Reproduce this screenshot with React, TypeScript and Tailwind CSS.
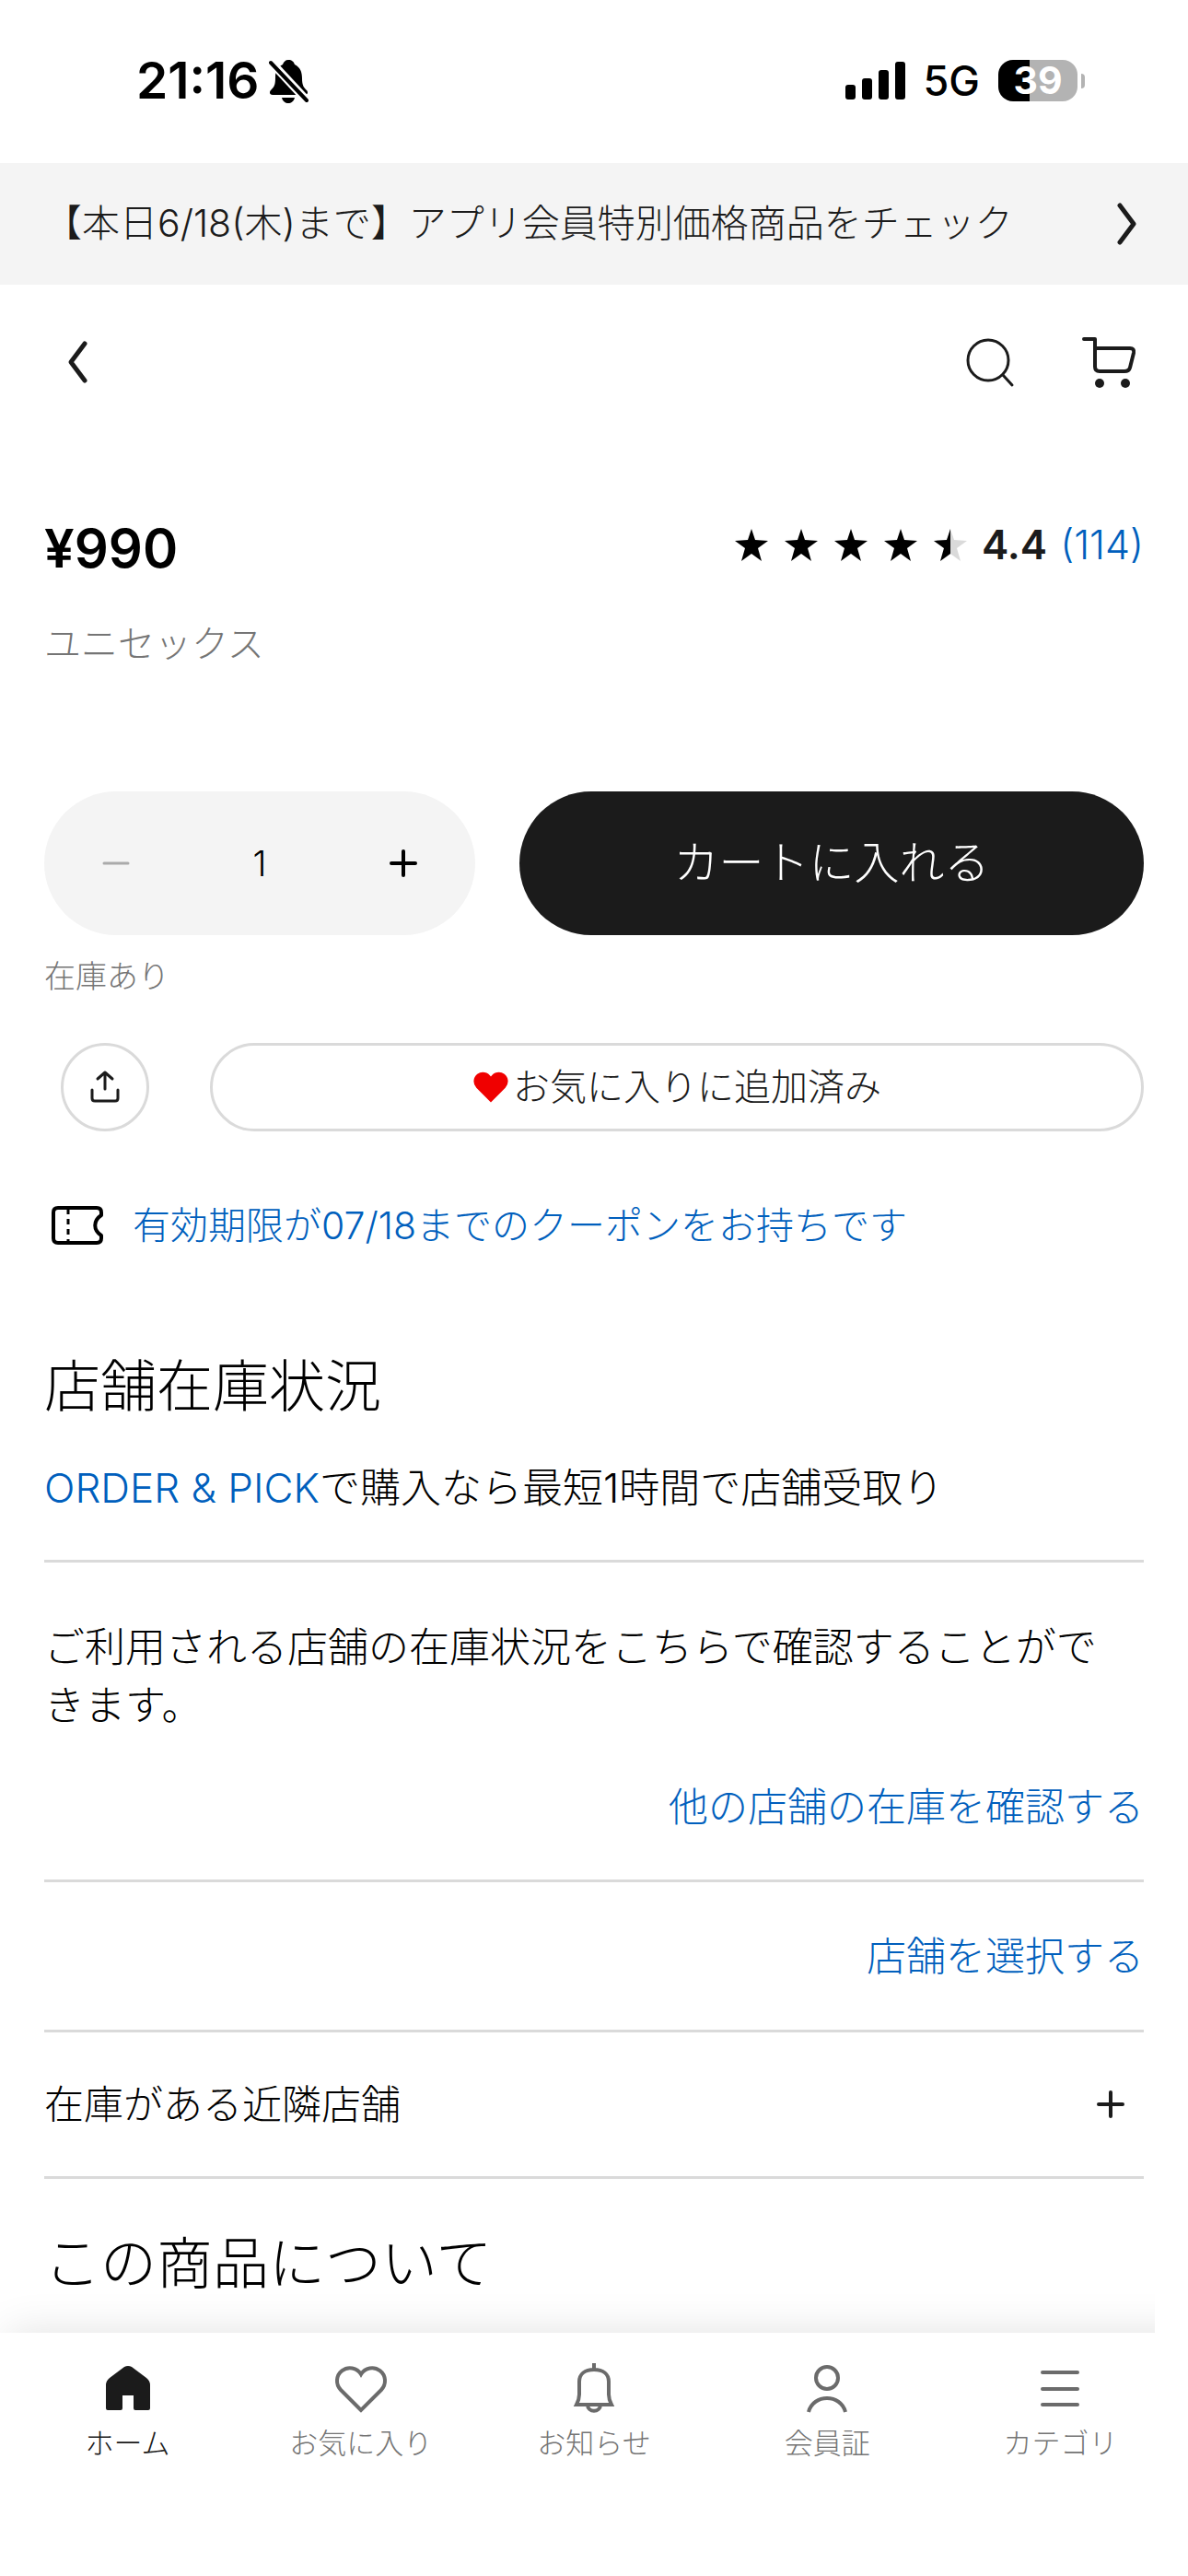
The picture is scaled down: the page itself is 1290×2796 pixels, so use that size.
import React, { useState } from 'react';

const HEART = 'M28 48 L6 26 A14 14 0 1 1 28 9 A14 14 0 1 1 50 26 Z';
const STAR = 'M18 0 L22 12 L36 13 L25 21 L29 35 L18 27 L7 35 L11 21 L0 13 L14 12 Z';

function Chevron({ flip = false }: { flip?: boolean }) {
  return (
    <svg width="24" height="48" viewBox="0 0 24 48" fill="none" stroke="#1b1b1b" strokeWidth="5" strokeLinecap="round" strokeLinejoin="round">
      <path d={flip ? 'M20 4 L5 24 L20 44' : 'M4 4 L19 24 L4 44'} />
    </svg>
  );
}

function Plus({ color }: { color: string }) {
  return (
    <svg width="32" height="32" viewBox="0 0 32 32" stroke={color} strokeWidth="4" strokeLinecap="round">
      <path d="M3 16 H29 M16 3 V29" />
    </svg>
  );
}

function StatusBar() {
  return (
    <div className="flex h-[177px] items-center justify-between pr-28 pb-0.5 pl-[148px] text-black">
      <div className="flex items-center gap-2.5">
        <span className="text-[55px] leading-none font-semibold">21:16</span>
        <svg width="44" height="48" viewBox="0 0 44 48" fill="#000">
          <path d="M21 1 C25 1 27 3 28 6 C34 9 36 14 36 21 C36 29 38 31 41 34 C43 36 42 39 39 39 H4 C1 39 0 36 2 34 C6 30 7 28 7 20 C7 13 9 9 15 6 C16 3 18 1 21 1 Z" />
          <path d="M14 42 H28 C27 46 24 48 21 48 C18 48 15 46 14 42 Z" />
          <path d="M2 3 L41 45" stroke="#fff" strokeWidth="9" />
          <path d="M2 4 L41 45" stroke="#000" strokeWidth="4" strokeLinecap="round" />
        </svg>
      </div>
      <div className="flex items-center">
        <svg width="65" height="42" viewBox="0 0 65 42" fill="#000">
          <rect x="0" y="25" width="11" height="16" rx="3" />
          <rect x="18" y="18" width="11" height="23" rx="3" />
          <rect x="36" y="9" width="11" height="32" rx="3" />
          <rect x="54" y="0" width="11" height="41" rx="3" />
        </svg>
        <span className="ml-5 text-[45px] leading-none font-medium">5G</span>
        <div className="ml-5 flex items-center gap-1">
          <div className="flex h-[45px] w-[86px] items-center justify-center rounded-2xl bg-[linear-gradient(to_right,#000_39%,#b3b3b3_39%)] text-[41px] leading-none font-bold text-white">
            39
          </div>
          <div className="h-4 w-1 rounded-r-full bg-[#b3b3b3]" />
        </div>
      </div>
    </div>
  );
}

function Stars() {
  return (
    <div className="flex gap-[18px]" role="img" aria-label="4.4">
      {[0, 1, 2, 3].map((n) => (
        <svg key={n} width="36" height="35" viewBox="0 0 36 35">
          <path d={STAR} />
        </svg>
      ))}
      <svg width="36" height="35" viewBox="0 0 36 35">
        <path d={STAR} fill="#dadada" />
        <path d="M18 0 L18 27 L7 35 L11 21 L0 13 L14 12 Z" />
      </svg>
    </div>
  );
}

const navItems = [
  {
    label: 'ホーム',
    icon: (
      <path
        fill="#1b1b1b"
        d="M26 5 Q30 3 34 5 L50 17 Q54 20 54 25 V50 Q54 52 52 52 H38 Q36 52 36 50 V36 H24 V50 Q24 52 22 52 H8 Q6 52 6 50 V25 Q6 20 10 17 Z"
      />
    )
  },
  {
    label: 'お気に入り',
    icon: <path transform="translate(2 4)" d={HEART} />
  },
  {
    label: 'お知らせ',
    icon: <path d="M30 1 V7 M11 46 H49 C47 42 46 39 46 35 V21 C46 13 40 8 30 8 C20 8 14 13 14 21 V35 C14 39 13 42 11 46 Z M23 46 C23 55 37 55 37 46" />
  },
  {
    label: '会員証',
    icon: (
      <>
        <circle cx="30" cy="17" r="12" />
        <path d="M10 54 C15 34 45 34 50 54" />
      </>
    )
  },
  {
    label: 'カテゴリ',
    icon: <path strokeLinecap="round" d="M11 11 H49 M11 29 H49 M11 46 H49" />
  }
];

export default function App() {
  const [quantity, setQuantity] = useState<number>(1);

  return (
    <div
      lang="ja"
      className="flex min-h-screen flex-col bg-white font-['Inter','Noto_Sans_CJK_JP',sans-serif] font-light text-black"
    >
      <StatusBar />

      <a href="#sale" className="flex h-[132px] items-center justify-between bg-[#f4f4f4] pr-[54px] pl-12 text-[41px] text-[#1b1b1b]">
        <span>【本日6/18(木)まで】アプリ会員特別価格商品をチェック</span>
        <Chevron />
      </a>

      <header className="flex h-[168px] items-center justify-between pr-14 pl-[72px]">
        <button type="button" aria-label="戻る">
          <Chevron flip />
        </button>
        <div className="flex items-center gap-[71px]">
          <button type="button" aria-label="検索">
            <svg width="56" height="56" viewBox="0 0 56 56" fill="none" stroke="#1b1b1b" strokeWidth="3" strokeLinecap="round">
              <circle cx="26" cy="26" r="22" />
              <path d="M42 42 L52 53" />
            </svg>
          </button>
          <button type="button" aria-label="カート">
            <svg width="60" height="56" viewBox="0 0 60 56" fill="none" stroke="#1b1b1b" strokeWidth="4" strokeLinecap="round" strokeLinejoin="round">
              <path d="M3 3 H15 V33 Q15 38 20 38 H47 Q52 38 53 34 L57 18 Q58 13 53 13 H15" />
              <circle cx="20" cy="51" r="5" fill="#1b1b1b" stroke="none" />
              <circle cx="48" cy="51" r="5" fill="#1b1b1b" stroke="none" />
            </svg>
          </button>
        </div>
      </header>

      <main className="px-12">
        {/* Price and rating */}
        <div className="mt-20 flex items-center justify-between">
          <p className="text-[58px] leading-[76px] font-semibold">¥990</p>
          <div className="flex items-center pb-2">
            <Stars />
            <span className="ml-4 text-[44px] leading-[60px] font-semibold text-[#1b1b1b]">4.4</span>
            <a href="#reviews" className="ml-3.5 text-[43px] leading-[60px] text-[#005fbd]">
              (114)
            </a>
          </div>
        </div>
        <p className="mt-9 text-[40px] leading-[60px] text-[#757575]">ユニセックス</p>

        {/* Quantity and cart */}
        <div className="mt-[130px] flex gap-12">
          <div className="grid h-[156px] w-[468px] grid-cols-3 items-center rounded-full bg-[#f4f4f4]">
            <button
              type="button"
              aria-label="減らす"
              className="flex justify-center"
              onClick={() => setQuantity(Math.max(1, quantity - 1))}
            >
              <svg width="32" height="32" viewBox="0 0 32 32" stroke="#aaa" strokeWidth="3" strokeLinecap="round">
                <path d="M3 16 H29" />
              </svg>
            </button>
            <input
              type="text"
              aria-label="数量"
              className="w-full bg-transparent text-center text-[38px]"
              value={quantity}
              onChange={(e) => setQuantity(Number(e.target.value) || 1)}
            />
            <button type="button" aria-label="増やす" className="flex justify-center" onClick={() => setQuantity(quantity + 1)}>
              <Plus color="#000" />
            </button>
          </div>
          <button type="button" className="h-[156px] flex-1 rounded-full bg-[#1b1b1b] text-[49px] text-white">
            カートに入れる
          </button>
        </div>
        <p className="mt-5 text-[34px] leading-[50px] text-[#757575]">在庫あり</p>

        {/* Share and wish list */}
        <div className="mt-[47px] flex gap-[66px] pl-[18px]">
          <button
            type="button"
            aria-label="共有"
            className="flex h-24 w-24 items-center justify-center rounded-full border-3 border-[#dadada]"
          >
            <svg width="32" height="38" viewBox="0 0 32 38" fill="none" stroke="#1b1b1b" strokeWidth="3" strokeLinecap="round" strokeLinejoin="round">
              <path d="M16 21 V3 M8 10 L16 3 L24 10 M2 22 V31 Q2 34 5 34 H27 Q30 34 30 31 V22" />
            </svg>
          </button>
          <button
            type="button"
            className="flex h-24 flex-1 items-center justify-center gap-1 rounded-full border-3 border-[#dadada] text-[40px] text-[#1b1b1b]"
          >
            <svg width="40" height="36" viewBox="0 0 56 50" fill="#f00000">
              <path d={HEART} />
            </svg>
            お気に入りに追加済み
          </button>
        </div>

        <a href="#coupon" className="mt-[72px] flex items-center gap-[30px] pl-2 text-[41px] leading-[60px] text-[#005fbd]">
          <svg width="58" height="46" viewBox="0 0 58 46" fill="none" stroke="#000" strokeWidth="4" strokeLinejoin="round">
            <path d="M7 4 H49 Q54 4 54 9 V12 C45 18 45 28 54 34 V37 Q54 42 49 42 H7 Q2 42 2 37 V9 Q2 4 7 4 Z" />
            <path d="M18 5 V41" strokeWidth="3" strokeDasharray="6 5" />
          </svg>
          有効期限が07/18までのクーポンをお持ちです
        </a>

        {/* Store stock */}
        <h2 className="mt-[105px] text-[61px] leading-[80px]">店舗在庫状況</h2>
        <p className="mt-10 text-[44px] leading-[60px]">
          <a href="#order-pick" className="text-[#005fbd]">
            ORDER & PICK
          </a>
          で購入なら最短1時間で店舗受取り
        </p>
        <div className="mt-12 border-t-3 border-[#dadada] pt-[61px] pb-[49px] text-[44px]">
          <p className="pr-12 leading-[63px]">ご利用される店舗の在庫状況をこちらで確認することができます。</p>
          <a href="#other-stores" className="mt-12 block text-right text-[43px] leading-[60px] text-[#005fbd]">
            他の店舗の在庫を確認する
          </a>
        </div>
        <div className="border-t-3 border-[#dadada] py-[50px] text-right text-[43px] leading-[60px]">
          <a href="#select-store" className="block text-[#005fbd]">
            店舗を選択する
          </a>
        </div>
        <button
          type="button"
          className="flex w-full items-center justify-between border-y-3 border-[#dadada] py-12 pr-5 text-[43px] leading-[60px]"
        >
          在庫がある近隣店舗
          <Plus color="#1b1b1b" />
        </button>

        <h2 className="mt-[52px] mb-8 text-[61px] leading-[80px]">この商品について</h2>
      </main>

      {/* Tab bar */}
      <nav className="relative mt-auto h-[264px] bg-white px-3 pt-8">
        <div className="absolute right-9 bottom-full left-0 h-12 overflow-hidden">
          <div className="mt-12 -mr-24 ml-2 h-24 shadow-[0_0_48px_rgba(0,0,0,0.12)]" />
        </div>
        <div className="grid grid-cols-5">
          {navItems.map((item, idx) => (
            <a
              key={item.label}
              href="#tab"
              className={`flex flex-col items-center gap-1 text-[31px] leading-[48px] ${idx === 0 ? 'text-[#1b1b1b]' : 'text-[#757575]'}`}
            >
              <svg width="60" height="60" viewBox="0 0 60 60" fill="none" stroke={idx === 0 ? 'none' : '#6b6b6b'} strokeWidth="4">
                {item.icon}
              </svg>
              {item.label}
            </a>
          ))}
        </div>
      </nav>
    </div>
  );
}
